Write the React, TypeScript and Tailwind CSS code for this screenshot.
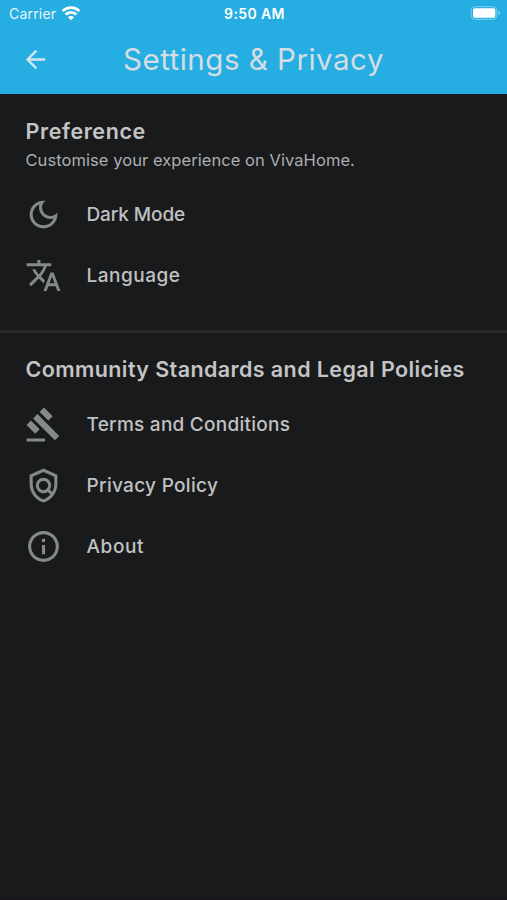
import type { ComponentType } from "react";
import { MdArrowBack, MdGavel, MdInfoOutline, MdOutlineDarkMode, MdOutlinePolicy, MdTranslate } from "react-icons/md";

type RowProps = { icon: ComponentType<{ className?: string }>; label: string; spacing: string };

function Row({ icon: Icon, label, spacing }: RowProps) {
  return (
    <li className="flex h-[61px] items-center">
      <Icon className="size-[37px] shrink-0 text-[#85898a]" />
      <span className={`ml-[24.5px] text-[19px] leading-6 font-medium text-[#c0c1c2] ${spacing}`}>{label}</span>
    </li>
  );
}

function StatusBar() {
  return (
    <div className="grid h-7 grid-cols-3 items-center pr-[7px] pl-[9px] font-['Inter',sans-serif] text-white">
      <div className="flex items-center gap-[5px]">
        <span className="text-[14px] leading-5 tracking-[0.2px] text-[#e6f7fd]">Carrier</span>
        <svg className="-mt-[2px] h-[15px] w-[20px]" viewBox="0 0 20 15" fill="none" stroke="currentColor" strokeWidth="2.8">
          <path d="M1.6 5a12 12 0 0 1 16.8 0" />
          <path d="M4.6 8.6a7.7 7.7 0 0 1 10.8 0" />
          <path d="M10 14.2 7 11.2a4.2 4.2 0 0 1 6 0z" fill="currentColor" stroke="none" />
        </svg>
      </div>
      <span className="text-center text-[14px] leading-5 font-semibold tracking-[0.4px]">9:50 AM</span>
      <svg className="-mt-[2px] h-[14px] w-[30px] justify-self-end" viewBox="0 0 30 14">
        <rect x="1.2" y="0.7" width="25.6" height="12.6" rx="3.6" fill="none" stroke="#7fd0ef" strokeWidth="1" />
        <rect x="3" y="2.3" width="22.3" height="9.4" rx="1.8" fill="#fff" />
        <path d="M28.2 4.8v4.4c1-.4 1.6-1.2 1.6-2.2s-.6-1.8-1.6-2.2z" fill="#7fd0ef" />
      </svg>
    </div>
  );
}

export default function App() {
  return (
    <div className="flex h-[900px] w-full flex-col overflow-hidden border-b-2 border-[#1b1319] bg-[#191a1c] font-['Inter',sans-serif] whitespace-nowrap">
      <header className="h-[94px] shrink-0 bg-[#26ade1]">
        <StatusBar />
        <div className="grid h-[62px] grid-cols-[72px_1fr_72px] items-center">
          <button aria-label="Back" className="ml-[21px] w-fit text-[#d3e6ef]">
            <MdArrowBack className="size-[29px]" />
          </button>
          <h1 className="text-center text-[29.5px] leading-9 font-normal tracking-[0.5px] text-[#d5dde4]">Settings &amp; Privacy</h1>
        </div>
      </header>
      <section className="h-[236px] shrink-0 px-[25px] pt-[25px]">
        <h2 className="pl-[0.5px] text-[21.5px] leading-6 font-semibold tracking-[0.6px] text-[#c4c4c5]">Preference</h2>
        <p className="mt-[7px] pl-[0.5px] text-[16.5px] leading-5 tracking-[0.06px] text-[#adaeaf]">Customise your experience on VivaHome.</p>
        <ul className="mt-[14px]">
          <Row icon={MdOutlineDarkMode} label="Dark Mode" spacing="tracking-[-0.1px]" />
          <Row icon={MdTranslate} label="Language" spacing="tracking-[0.5px]" />
        </ul>
      </section>
      <hr className="h-[3px] shrink-0 border-0 bg-[#28292b]" />
      <section className="px-[25px] pt-[24px]">
        <h2 className="pl-[0.5px] text-[21.5px] leading-6 font-semibold tracking-[0.4px] text-[#c4c4c5]">Community Standards and Legal Policies</h2>
        <ul className="mt-[13px]">
          <Row icon={MdGavel} label="Terms and Conditions" spacing="tracking-[0.25px]" />
          <Row icon={MdOutlinePolicy} label="Privacy Policy" spacing="tracking-[0.3px]" />
          <Row icon={MdInfoOutline} label="About" spacing="tracking-[0.6px]" />
        </ul>
      </section>
    </div>
  );
}
